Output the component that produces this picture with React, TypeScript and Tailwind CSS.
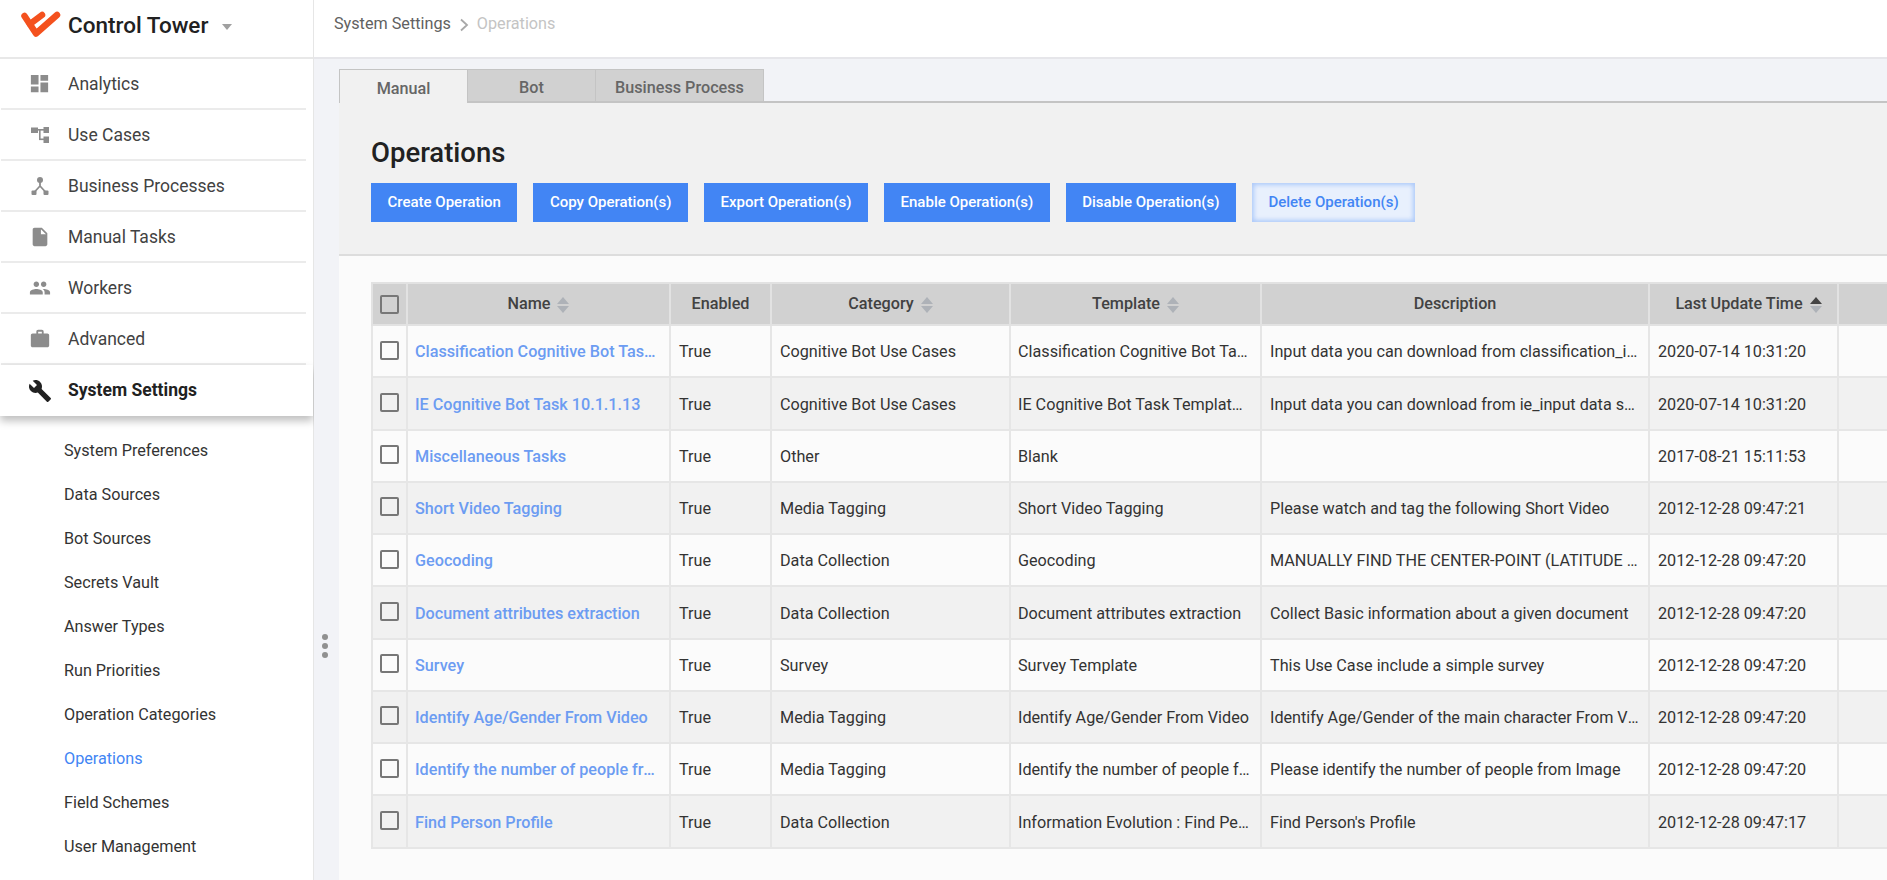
import { MdBuild, MdDashboard, MdInsertDriveFile, MdPeople, MdWork } from 'react-icons/md';
import type { ReactNode } from 'react';

const navItems: { label: string; icon: ReactNode }[] = [
  { label: 'Analytics', icon: <MdDashboard size={23} /> },
  { label: 'Use Cases', icon: <UseCasesIcon /> },
  { label: 'Business Processes', icon: <ProcessIcon /> },
  { label: 'Manual Tasks', icon: <MdInsertDriveFile size={22} /> },
  { label: 'Workers', icon: <MdPeople size={22} /> },
  { label: 'Advanced', icon: <MdWork size={22} /> },
];

const subItems = [
  'System Preferences',
  'Data Sources',
  'Bot Sources',
  'Secrets Vault',
  'Answer Types',
  'Run Priorities',
  'Operation Categories',
  'Operations',
  'Field Schemes',
  'User Management',
];

const buttons = [
  'Create Operation',
  'Copy Operation(s)',
  'Export Operation(s)',
  'Enable Operation(s)',
  'Disable Operation(s)',
];

const rows = [
  ['Classification Cognitive Bot Task 10.1.1.13', 'Cognitive Bot Use Cases', 'Classification Cognitive Bot Task Template', 'Input data you can download from classification_input data set', '2020-07-14 10:31:20'],
  ['IE Cognitive Bot Task 10.1.1.13', 'Cognitive Bot Use Cases', 'IE Cognitive Bot Task Template 10.1', 'Input data you can download from ie_input data set and upload it', '2020-07-14 10:31:20'],
  ['Miscellaneous Tasks', 'Other', 'Blank', '', '2017-08-21 15:11:53'],
  ['Short Video Tagging', 'Media Tagging', 'Short Video Tagging', 'Please watch and tag the following Short Video', '2012-12-28 09:47:21'],
  ['Geocoding', 'Data Collection', 'Geocoding', 'MANUALLY FIND THE CENTER-POINT (LATITUDE AND LONGITUDE)', '2012-12-28 09:47:20'],
  ['Document attributes extraction', 'Data Collection', 'Document attributes extraction', 'Collect Basic information about a given document', '2012-12-28 09:47:20'],
  ['Survey', 'Survey', 'Survey Template', 'This Use Case include a simple survey', '2012-12-28 09:47:20'],
  ['Identify Age/Gender From Video', 'Media Tagging', 'Identify Age/Gender From Video', 'Identify Age/Gender of the main character From Video', '2012-12-28 09:47:20'],
  ['Identify the number of people from Image', 'Media Tagging', 'Identify the number of people from Image', 'Please identify the number of people from Image', '2012-12-28 09:47:20'],
  ['Find Person Profile', 'Data Collection', 'Information Evolution : Find Person Profile', "Find Person's Profile", '2012-12-28 09:47:17'],
];

function Logo() {
  return (
    <svg width="42" height="27" viewBox="0 0 42 27" className="mb-[2px] shrink-0">
      <path d="M4.5 5 L16 22.5 L37 4" fill="none" stroke="#f4511e" strokeWidth="6.5" strokeLinecap="round" strokeLinejoin="round" />
      <path d="M10 13 L22 4" fill="none" stroke="#f4511e" strokeWidth="6.5" strokeLinecap="round" />
    </svg>
  );
}

function UseCasesIcon() {
  return (
    <svg width="20" height="18" viewBox="0 0 20 18" fill="currentColor">
      <rect x="1" y="1.5" width="7" height="5.5" />
      <rect x="13.5" y="1" width="5.5" height="6" />
      <rect x="13.5" y="10.5" width="5.5" height="6.5" />
      <rect x="7" y="3" width="7" height="1.6" />
      <rect x="9" y="4" width="1.6" height="10" />
      <rect x="9" y="12.5" width="5" height="1.6" />
    </svg>
  );
}

function ProcessIcon() {
  return (
    <svg width="20" height="20" viewBox="0 0 20 20" fill="currentColor">
      <circle cx="10" cy="4" r="3" />
      <rect x="1.5" y="14.5" width="5" height="4.5" rx="1" />
      <rect x="13.5" y="14.5" width="5" height="4.5" rx="1" />
      <path d="M10 6 L10 10 L4 16.5 M10 10 L16 16.5" fill="none" stroke="currentColor" strokeWidth="1.8" />
    </svg>
  );
}

function SortIcon({ active }: { active?: boolean }) {
  return (
    <span className="ml-[7px] inline-flex flex-col gap-[2px] align-middle">
      <span className={`h-0 w-0 border-x-[6px] border-b-[7px] border-x-transparent ${active ? 'border-b-[#444444]' : 'border-b-[#aeb2b8]'}`} />
      <span className="h-0 w-0 border-x-[6px] border-t-[7px] border-x-transparent border-t-[#aeb2b8]" />
    </span>
  );
}

function Checkbox({ raised }: { raised?: boolean }) {
  return <span className={`mx-auto block h-[19px] w-[19px] rounded-[2px] border-2 border-[#777777] ${raised ? 'mb-[2px]' : ''}`} />;
}

function Sidebar() {
  return (
    <aside className="flex w-[314px] shrink-0 flex-col border-r border-[#e6e6e6] bg-white">
      <div className="flex h-[59px] items-center border-b-2 border-[#e8e8e8] pb-[6px] pl-[20px]">
        <Logo />
        <span className="ml-[6px] text-[22.5px] font-medium text-[#212121]">Control Tower</span>
        <span className="ml-[14px] mt-[2px] h-0 w-0 border-x-[5px] border-t-[6px] border-x-transparent border-t-[#a0a0a0]" />
      </div>
      <nav>
        {navItems.map((item) => (
          <div key={item.label} className="ml-px flex h-[51px] w-[305px] items-center border-b-2 border-[#ebebeb] text-[#424242]">
            <span className="flex w-[67px] justify-center pl-[10px] text-[#8c8c8c]">{item.icon}</span>
            <span className="pt-[2px] text-[17.5px]">{item.label}</span>
          </div>
        ))}
        <div className="flex h-[51px] items-center text-[#212121] shadow-[0_5px_8px_rgba(0,0,0,0.25)]">
          <span className="ml-px flex w-[67px] justify-center pl-[10px]"><MdBuild size={24} /></span>
          <span className="text-[17.5px] font-bold">System Settings</span>
        </div>
      </nav>
      <div className="pt-[13px]">
        {subItems.map((item) => (
          <div key={item} className={`flex h-[44px] items-center pl-[64px] text-[16.2px] ${item === 'Operations' ? 'text-[#4285f4]' : 'text-[#333333]'}`}>
            {item}
          </div>
        ))}
      </div>
    </aside>
  );
}

function OperationsTable() {
  return (
    <table className="w-[1516px] table-fixed border-collapse text-[16.2px] text-[#333333]">
      <colgroup>
        <col className="w-[35px]" />
        <col className="w-[263px]" />
        <col className="w-[101px]" />
        <col className="w-[239px]" />
        <col className="w-[251px]" />
        <col className="w-[388px]" />
        <col className="w-[189px]" />
        <col />
      </colgroup>
      <thead>
        <tr className="h-[42px] border-y-2 border-[#e2e2e2] bg-[#d1d1d1] text-[16.2px] text-[#424242]">
          <th className="border-x-2 border-[#e2e2e2]"><Checkbox /></th>
          <th className="border-r-2 border-[#e2e2e2] font-medium">Name<SortIcon /></th>
          <th className="border-r-2 border-[#e2e2e2] font-medium">Enabled</th>
          <th className="border-r-2 border-[#e2e2e2] font-medium">Category<SortIcon /></th>
          <th className="border-r-2 border-[#e2e2e2] font-medium">Template<SortIcon /></th>
          <th className="border-r-2 border-[#e2e2e2] font-medium">Description</th>
          <th className="border-r-2 border-[#e2e2e2] pl-[10px] font-medium">Last Update Time<SortIcon active /></th>
          <th />
        </tr>
      </thead>
      <tbody>
        {rows.map((row, i) => (
          <tr key={row[0]} className={`h-[52.25px] border-b-2 border-[#e6e6e6] ${i % 2 === 0 ? 'bg-[#fbfbfb]' : 'bg-[#f1f1f1]'}`}>
            <td className="border-x-2 border-[#e6e6e6]"><Checkbox raised /></td>
            <td className="truncate border-r-2 border-[#e6e6e6] pl-[7px] pr-[8px] pt-[3px] font-medium text-[#6c9cf2]">{row[0]}</td>
            <td className="border-r-2 border-[#e6e6e6] px-[8px] pt-[3px]">True</td>
            <td className="truncate border-r-2 border-[#e6e6e6] px-[8px] pt-[3px]">{row[1]}</td>
            <td className="truncate border-r-2 border-[#e6e6e6] pl-[7px] pr-[10px] pt-[3px]">{row[2]}</td>
            <td className="truncate border-r-2 border-[#e6e6e6] px-[8px] pt-[3px]">{row[3]}</td>
            <td className="border-r-2 border-[#e6e6e6] px-[8px] pt-[3px]">{row[4]}</td>
            <td />
          </tr>
        ))}
      </tbody>
    </table>
  );
}

export default function App() {
  return (
    <div className="relative flex h-[880px] w-[1887px] overflow-hidden bg-white font-['Roboto',sans-serif]">
      <Sidebar />
      <main className="flex min-w-0 flex-1 flex-col bg-[#f2f3f7]">
        <header className="flex h-[59px] shrink-0 items-center border-b-2 border-[#e6e6ea] bg-white pb-[8px] pl-[20px] text-[16.2px] text-[#616161]">
          <span>System Settings</span>
          <svg width="10" height="14" viewBox="0 0 10 14" className="mx-[8px]"><path d="M2 1.5 L8 7 L2 12.5" fill="none" stroke="#a8a8a8" strokeWidth="1.8" /></svg>
          <span className="text-[#c4c4c4]">Operations</span>
        </header>
        <div className="flex min-h-0 flex-1 flex-col pl-[25px] pt-[10px]">
          <div className="flex h-[34px] shrink-0 border-b-2 border-[#c4c4c4] text-[16.2px] font-medium text-[#666666]">
            <div className="flex h-[34px] w-[129px] items-center justify-center border-x border-t border-[#c4c4c4] bg-[#f1f1f1] pt-[5px]">Manual</div>
            <div className="flex h-[32px] w-[128px] items-center justify-center border-r border-t border-[#c4c4c4] bg-[#d1d1d1] pt-[5px]">Bot</div>
            <div className="flex h-[32px] w-[168px] items-center justify-center border-r border-t border-[#c4c4c4] bg-[#d1d1d1] pt-[5px]">Business Process</div>
          </div>
          <section className="shrink-0 border-b-2 border-[#dddddd] bg-[#f1f1f1] pl-[32px]">
            <h1 className="pt-[32px] text-[27.5px] leading-[36px] font-medium text-[#212121]">Operations</h1>
            <div className="mt-[12px] flex gap-[16px] pb-[32px]">
              {buttons.map((label) => (
                <button key={label} className="flex h-[39px] items-center bg-[#4285f4] px-[16.5px] text-[15px] font-medium text-white">{label}</button>
              ))}
              <button className="flex h-[39px] items-center bg-[#e8f0fd] px-[16.5px] text-[15px] font-medium text-[#4285f4] shadow-[inset_0_0_4px_2px_rgba(66,133,244,0.35)]">Delete Operation(s)</button>
            </div>
          </section>
          <div className="flex-1 bg-[#fbfbfb] pl-[32px] pt-[26px]">
            <OperationsTable />
          </div>
        </div>
      </main>
      {/* resize handle dots, sits over the gutter */}
      <div className="absolute left-[322px] top-[634px] flex flex-col gap-[3px]">
        <span className="h-[6px] w-[6px] rounded-full bg-[#909090]" />
        <span className="h-[6px] w-[6px] rounded-full bg-[#909090]" />
        <span className="h-[6px] w-[6px] rounded-full bg-[#909090]" />
      </div>
    </div>
  );
}
